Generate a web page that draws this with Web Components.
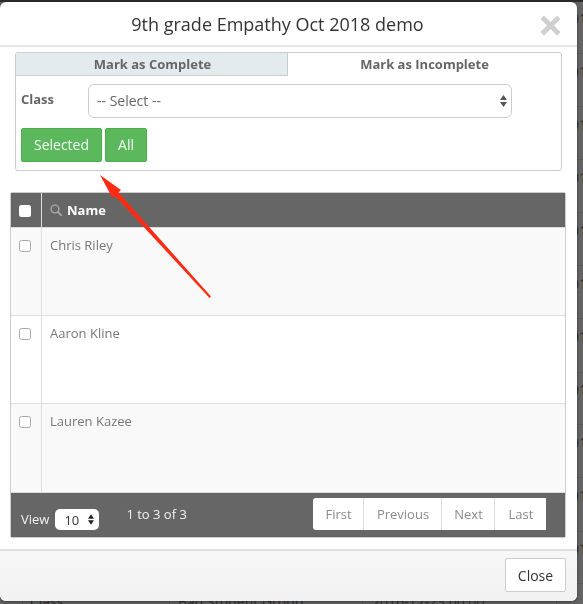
<!DOCTYPE html>
<html lang="en"><head><meta charset="utf-8"><title>Mark complete</title>
<style>
html,body{margin:0;height:100%;overflow:hidden}
body{font-family:"Open Sans","Noto Sans",sans-serif;background:#646464;color:#333}
</style></head><body>
<page-backdrop></page-backdrop>
<app-modal heading="9th grade Empathy Oct 2018 demo">
  <status-panel></status-panel>
  <student-table>
    <student-row name="Chris Riley" shade></student-row>
    <student-row name="Aaron Kline"></student-row>
    <student-row name="Lauren Kazee" shade></student-row>
  </student-table>
</app-modal>
<red-arrow></red-arrow>
<script>
function def(name,html){
  customElements.define(name,class extends HTMLElement{
    connectedCallback(){
      if(this.shadowRoot)return;
      const r=this.attachShadow({mode:'open'});
      r.innerHTML=typeof html==='function'?html(this):html;
    }
  });
}
const arrows=(c)=>`<svg width="7" height="12" viewBox="0 0 7 12" aria-hidden="true"><path fill="${c}" d="M3.5 0 7 5H0zM3.5 12 0 7h7z"/></svg>`;
const rowLines=[51,104,157,210,263,316,370,422,475,529,581].map(t=>`<i style="top:${t}px"></i>`).join('');
const rowTexts=[7,60,113,166,219,272,325,378,431,484,537].map(t=>`<span style="left:571px;top:${t}px">01</span>`).join('');

def('page-backdrop',`<style>
:host{position:fixed;inset:0;display:block;background:#646464;border-top:2px solid #2b2b2b;box-sizing:border-box;overflow:hidden;font:14px "Open Sans",sans-serif;color:#2e2e2e}
i{position:absolute;left:577px;right:0;height:1px;background:#585858}
u{position:absolute;top:590px;bottom:0;width:1px;background:#585858}
span{position:absolute;white-space:nowrap}
</style>
${rowLines}${rowTexts}
<u style="left:22px"></u><u style="left:169px"></u><u style="left:362px"></u><u style="left:556px"></u>
<span style="left:30px;top:590px">Class</span><span style="left:178px;top:590px">Bad Student Group</span><span style="left:372px;top:590px">2016-12-23 00:00</span>`);

def('app-modal',h=>`<style>
:host{position:absolute;left:0;top:2px;width:577px;height:599px;display:flex;flex-direction:column;background:#fff;border-radius:6px;overflow:hidden;box-shadow:0 1px 3px rgba(0,0,0,.4)}
header{height:43px;flex:none;border-bottom:2px solid #e5e5e5;display:flex;align-items:center;justify-content:center;position:relative}
h1{margin:0;font:400 18px/24px "Open Sans",sans-serif;color:#333;position:relative;left:-11px}
svg{position:absolute;left:540px;top:13px}
main{flex:1;padding:5px 0 0 10px;min-height:0;display:flex;flex-direction:column}
footer{height:52px;flex:none;border-top:2px solid #e0e0e0;background:linear-gradient(#f7f7f7,#f1f1f1);display:flex;justify-content:flex-end;align-items:flex-start;padding:7px 11px 0 0;box-sizing:border-box}
button{font:400 14px "Open Sans",sans-serif;color:#333;background:#fff;border:1px solid #ccc;border-radius:2px;width:61px;height:34px;padding:0}
</style>
<header><h1>${h.getAttribute('heading')}</h1>
<svg width="21" height="21" viewBox="0 0 21 21" aria-label="Dismiss"><path fill="#cfcfcf" d="M4 0.5 10.5 7 17 0.5 20.5 4 14 10.5 20.5 17 17 20.5 10.5 14 4 20.5 0.5 17 7 10.5 0.5 4z"/></svg></header>
<main><slot></slot></main>
<footer><button>Close</button></footer>`);

def('status-panel',`<style>
:host{display:block;box-sizing:border-box;margin-left:5px;width:547px;height:119px;border:1px solid #ccc;border-radius:3px;overflow:hidden;font-family:"Open Sans",sans-serif}
.tabs{display:flex;height:23px}
.tabs div{font:700 13px/23px "Open Sans",sans-serif;color:#666;text-align:center;box-sizing:border-box}
.on{width:272px;background:#e4ebee;border-right:1px solid #ccc;border-bottom:1px solid #ccc;padding-left:2px}
.off{flex:1}
.row{display:flex;align-items:flex-start;padding:8px 0 0 5px}
label{width:67px;font:700 13px/30px "Open Sans",sans-serif;color:#666;flex:none}
.sel{width:424px;height:34px;box-sizing:border-box;border:1px solid #ccc;border-radius:6px;padding:0 4px 1px 8px;display:flex;align-items:center;justify-content:space-between;font-size:14px;color:#666}
.btns{display:flex;gap:3px;padding:10px 0 0 5px}
.btns span{height:34px;box-sizing:border-box;background:#5cb85c;border:1px solid #4cae4c;border-radius:2px;color:#f4fbf4;font-size:14px;line-height:32px;text-align:center}
</style>
<div class="tabs"><div class="on">Mark as Complete</div><div class="off">Mark as Incomplete</div></div>
<div class="row"><label>Class</label><div class="sel"><span>-- Select --</span>${arrows('#555')}</div></div>
<div class="btns"><span style="width:81px">Selected</span><span style="width:42px">All</span></div>`);

def('student-table',`<style>
:host{display:block;margin-top:21px;width:556px;box-sizing:border-box;border:1px solid #ccc;border-radius:2px;font-family:"Open Sans",sans-serif;background:#fff}
.head{height:34px;background:#666;display:flex;border-bottom:1px solid #ddd}
.cb{width:30px;flex:none;border-right:1px solid #ddd;position:relative}
.cb b{position:absolute;left:8px;top:12px;width:12px;height:12px;background:#fff;border-radius:2.5px;display:block}
.nm{display:flex;align-items:center;padding-left:8px;gap:5px;color:#fff;font:700 13px "Open Sans",sans-serif}
.foot{height:45px;background:#666;display:flex;color:#f2f2f2;font-size:13px;border-top:1px solid #ddd;box-sizing:border-box}
.view{padding:17px 0 0 10px;line-height:18px;display:flex;align-items:flex-start;height:max-content}
.num{width:44px;height:21px;background:#fff;border-radius:5px;margin:-1px 0 0 6px;box-sizing:border-box;display:flex;align-items:center;justify-content:space-between;padding:0 5px 0 9px;color:#333;font-size:13px}
.count{margin:12px 0 0 27px;line-height:18px}
nav{display:flex;margin:5px 19px 0 auto;height:32px;background:#fff;border-radius:3px 0 0 3px;color:#8a8a8a}
nav span{line-height:33px;text-align:center;box-sizing:border-box;border-right:1px solid #ddd;padding-left:1px}
nav span:last-child{border-right:0}
</style>
<div class="head"><div class="cb"><b></b></div><div class="nm">
<svg width="12" height="12" viewBox="0 0 12 12" aria-hidden="true"><circle cx="5" cy="5" r="3.9" fill="none" stroke="#aaa" stroke-width="1.4"/><path d="M8 8 11.3 11.3" stroke="#aaa" stroke-width="1.8" stroke-linecap="round"/></svg>Name</div></div>
<slot></slot>
<div class="foot"><div class="view">View<div class="num"><span>10</span>${arrows('#222').replace('width="7" height="12"','width="6" height="11"')}</div></div><div class="count">1 to 3 of 3</div>
<nav><span style="width:51px">First</span><span style="width:78px">Previous</span><span style="width:53px">Next</span><span style="width:51px">Last</span></nav></div>`);

def('student-row',h=>`<style>
:host{display:flex;height:88px;box-sizing:border-box;border-bottom:1px solid #ddd;background:${h.hasAttribute('shade')?'#f9f9f9':'#fff'};font-family:"Open Sans",sans-serif}
:host(:last-of-type){border-bottom:0}
.cb{width:30px;flex:none;border-right:1px solid #ddd;position:relative}
.cb b{position:absolute;left:8px;top:12px;width:12px;height:12px;box-sizing:border-box;border:1px solid #aaa;background:#fff;border-radius:2.5px}
.nm{padding:8px 0 0 8px;font-size:13px;line-height:18px;color:#777}
</style><div class="cb"><b></b></div><div class="nm">${h.getAttribute('name')}</div>`);

def('red-arrow',`<style>:host{position:absolute;inset:0;display:block;pointer-events:none}svg{display:block}</style>
<svg width="583" height="604" viewBox="0 0 583 604" aria-hidden="true"><path fill="#ff2a12" d="M100 175 121 190 118.5 192.500 211 296.500 209.500 298 115 196 112.500 198z"/></svg>`);
</script>
</body></html>
